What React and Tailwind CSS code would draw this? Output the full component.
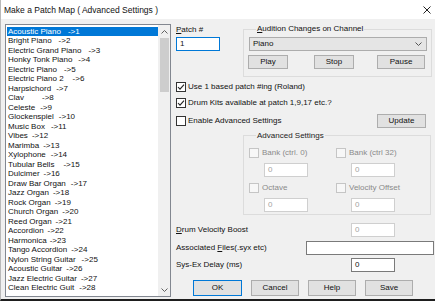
const patches = [
  ['Acoustic Piano', 7], ['Bright Piano', 7], ['Electric Grand Piano', 7], ['Honky Tonk Piano', 6],
  ['Electric Piano', 7], ['Electric Piano 2', 9], ['Harpsichord', 5], ['Clav', 18],
  ['Celeste', 5], ['Glockenspiel', 5], ['Music Box', 6], ['Vibes', 4],
  ['Marimba', 4], ['Xylophone', 5], ['Tubular Bells', 9], ['Dulcimer', 4],
  ['Draw Bar Organ', 5], ['Jazz Organ', 4], ['Rock Organ', 4], ['Church Organ', 4],
  ['Reed Organ', 4], ['Accordion', 4], ['Harmonica', 3], ['Tango Accordion', 4],
  ['Nylon String Guitar', 6], ['Acoustic Guitar', 4], ['Jazz Electric Guitar', 4], ['Clean Electric Guit', 5],
];

const Check = ({ checked, disabled }) => (
  <svg width="10" height="10" viewBox="0 0 10 10" className="shrink-0">
    <rect x="0.5" y="0.5" width="9" height="9" fill={disabled ? '#f7f7f7' : '#fff'} stroke={disabled ? '#c5c5c5' : '#333'} />
    {checked && <polyline points="2,5 4,7.2 8,2.6" fill="none" stroke="#222" strokeWidth="1.1" />}
  </svg>
);

const CheckRow = ({ label, checked, disabled, className = '' }) => (
  <div className={`flex items-center h-[10px] gap-[2px] ${className}`}>
    <Check checked={checked} disabled={disabled} />
    <span className={disabled ? 'text-[#8a8a8a] ml-[1px]' : 'text-[#111]'}>{label}</span>
  </div>
);

const TextBox = ({ value, disabled, className = '' }) => (
  <div
    className={`h-[14px] flex items-center pl-[3px] border bg-white ${
      disabled ? 'border-[#cfcfcf] text-[#a3a3a3]' : 'border-[#7a7a7a] text-[#111]'
    } ${className}`}
  >
    {value}
  </div>
);

const Btn = ({ label, className = '' }) => (
  <div className={`flex items-center justify-center bg-[#e1e1e1] border border-[#adadad] text-[#111] ${className}`}>
    {label}
  </div>
);

export default function App() {
  return (
    <div className="w-[435px] h-[301px] bg-[#f0f0f0] border-l border-[#b9b9b9] border-b-2 border-b-[#1e1e1e] flex flex-col overflow-hidden font-['Liberation_Sans',Arial,sans-serif] text-[8px] leading-[10px] text-[#111]">
      {/* title bar */}
      <div className="h-[19px] bg-white flex items-center justify-between pl-[3px] pr-[4px] shrink-0">
        <span className="text-[8.5px]">Make a Patch Map ( Advanced Settings )</span>
        <svg width="8" height="8" viewBox="0 0 8 8">
          <path d="M0.5 0.5 L7.5 7.5 M7.5 0.5 L0.5 7.5" stroke="#222" strokeWidth="1" />
        </svg>
      </div>

      <div className="flex pl-[4px] pt-[5px]">
        {/* patch list */}
        <div className="w-[166px] h-[273px] border border-[#828790] bg-white flex shrink-0">
          <div className="flex-1 pt-[1.5px] pl-[1px] overflow-hidden">
            {patches.map(([name, gap], i) => (
              <div
                key={name}
                className={`h-[9.5px] leading-[9.5px] pl-[1px] whitespace-nowrap ${
                  i === 0 ? 'bg-[#0078d7] text-white' : 'text-[#111]'
                }`}
              >
                {name}
                <span style={{ marginLeft: gap }}>{'->' + (i + 1)}</span>
              </div>
            ))}
          </div>
          <div className="w-[12px] bg-[#f0f0f0] flex flex-col items-center">
            <div className="h-[13px] flex items-center justify-center">
              <svg width="7" height="4" viewBox="0 0 7 4">
                <polyline points="0.5,3.5 3.5,0.5 6.5,3.5" fill="none" stroke="#606060" strokeWidth="1" />
              </svg>
            </div>
            <div className="w-[9px] h-[54px] bg-[#cdcdcd]" />
            <div className="flex-1" />
            <div className="h-[13px] flex items-center justify-center">
              <svg width="7" height="4" viewBox="0 0 7 4">
                <polyline points="0.5,0.5 3.5,3.5 6.5,0.5" fill="none" stroke="#606060" strokeWidth="1" />
              </svg>
            </div>
          </div>
        </div>

        {/* right side */}
        <div className="ml-[5px] flex flex-col w-[258px]">
          <div className="flex">
            <div className="w-[67px] flex flex-col">
              <div className="mt-[1px]"><span className="underline">P</span>atch #</div>
              <div className="mt-[2px] w-[44px] h-[14px] border border-[#0078d7] bg-white flex items-center pl-[3px]">1</div>
            </div>
            <fieldset className="w-[189px] border border-[#dcdcdc] pl-[5px] pr-[4px] pb-[7px]">
              <legend className="ml-[7px] px-[1px]"><span className="underline">A</span>udition Changes on Channel</legend>
              <div className="mt-[3px] h-[14px] bg-[#e5e5e5] border border-[#acacac] flex items-center justify-between pl-[3px] pr-[4px]">
                <span>Piano</span>
                <svg width="7" height="4" viewBox="0 0 7 4">
                  <polyline points="0.5,0.5 3.5,3.5 6.5,0.5" fill="none" stroke="#555" strokeWidth="1" />
                </svg>
              </div>
              <div className="mt-[4px] flex -ml-[1px]">
                <Btn label="Play" className="w-[40px] h-[14px]" />
                <Btn label="Stop" className="w-[40px] h-[14px] ml-[26px]" />
                <Btn label="Pause" className="w-[48px] h-[14px] ml-[23px]" />
              </div>
            </fieldset>
          </div>

          <CheckRow label="Use 1 based patch #ing (Roland)" checked className="mt-[5px]" />
          <CheckRow label="Drum Kits available at patch 1,9,17 etc.?" checked className="mt-[5.5px]" />
          <div className="mt-[6.5px] flex items-center h-[14px]">
            <CheckRow label="Enable Advanced Settings" />
            <Btn label="Update" className="w-[49px] h-[14px] ml-auto mr-[8px]" />
          </div>

          <fieldset className="mt-[2.5px] ml-[67px] w-[188px] border border-[#dcdcdc] pl-[5px] pb-[2px]">
            <legend className="ml-[7px] px-[1px] text-[#222]">Advanced Settings</legend>
            <div className="flex">
              <div className="w-[87px] flex flex-col">
                <CheckRow label="Bank (ctrl. 0)" disabled className="mt-[7px]" />
                <TextBox value="0" disabled className="mt-[5.5px] ml-[15px] w-[44px]" />
                <CheckRow label="Octave" disabled className="mt-[6px]" />
                <TextBox value="0" disabled className="mt-[5px] ml-[15px] w-[44px]" />
              </div>
              <div className="flex flex-col">
                <CheckRow label="Bank (ctrl 32)" disabled className="mt-[7px]" />
                <TextBox value="0" disabled className="mt-[5.5px] ml-[15px] w-[44px]" />
                <CheckRow label="Velocity Offset" disabled className="mt-[6px]" />
                <TextBox value="0" disabled className="mt-[5px] ml-[15px] w-[44px]" />
              </div>
            </div>
          </fieldset>

          <div className="mt-[8px] flex items-center h-[14px]">
            <span className="w-[175px]"><span className="underline">D</span>rum Velocity Boost</span>
            <TextBox value="0" disabled className="w-[44px]" />
          </div>
          <div className="mt-[4px] flex items-center h-[14px]">
            <span className="w-[130px]">Associated <span className="underline">F</span>iles(.syx etc)</span>
            <TextBox value="" className="w-[128px]" />
          </div>
          <div className="mt-[3px] flex items-center h-[14px]">
            <span className="w-[175px]">Sys-Ex Delay (ms)</span>
            <TextBox value="0" className="w-[44px]" />
          </div>

          <div className="mt-[8px] flex pl-[17px] gap-[9px]">
            <div className="w-[49px] h-[16px] flex items-center justify-center bg-[#e1e1e1] border border-[#0078d7]">OK</div>
            <Btn label="Cancel" className="w-[48px] h-[16px]" />
            <Btn label="Help" className="w-[48px] h-[16px]" />
            <Btn label="Save" className="w-[48px] h-[16px]" />
          </div>
        </div>
      </div>
    </div>
  );
}
